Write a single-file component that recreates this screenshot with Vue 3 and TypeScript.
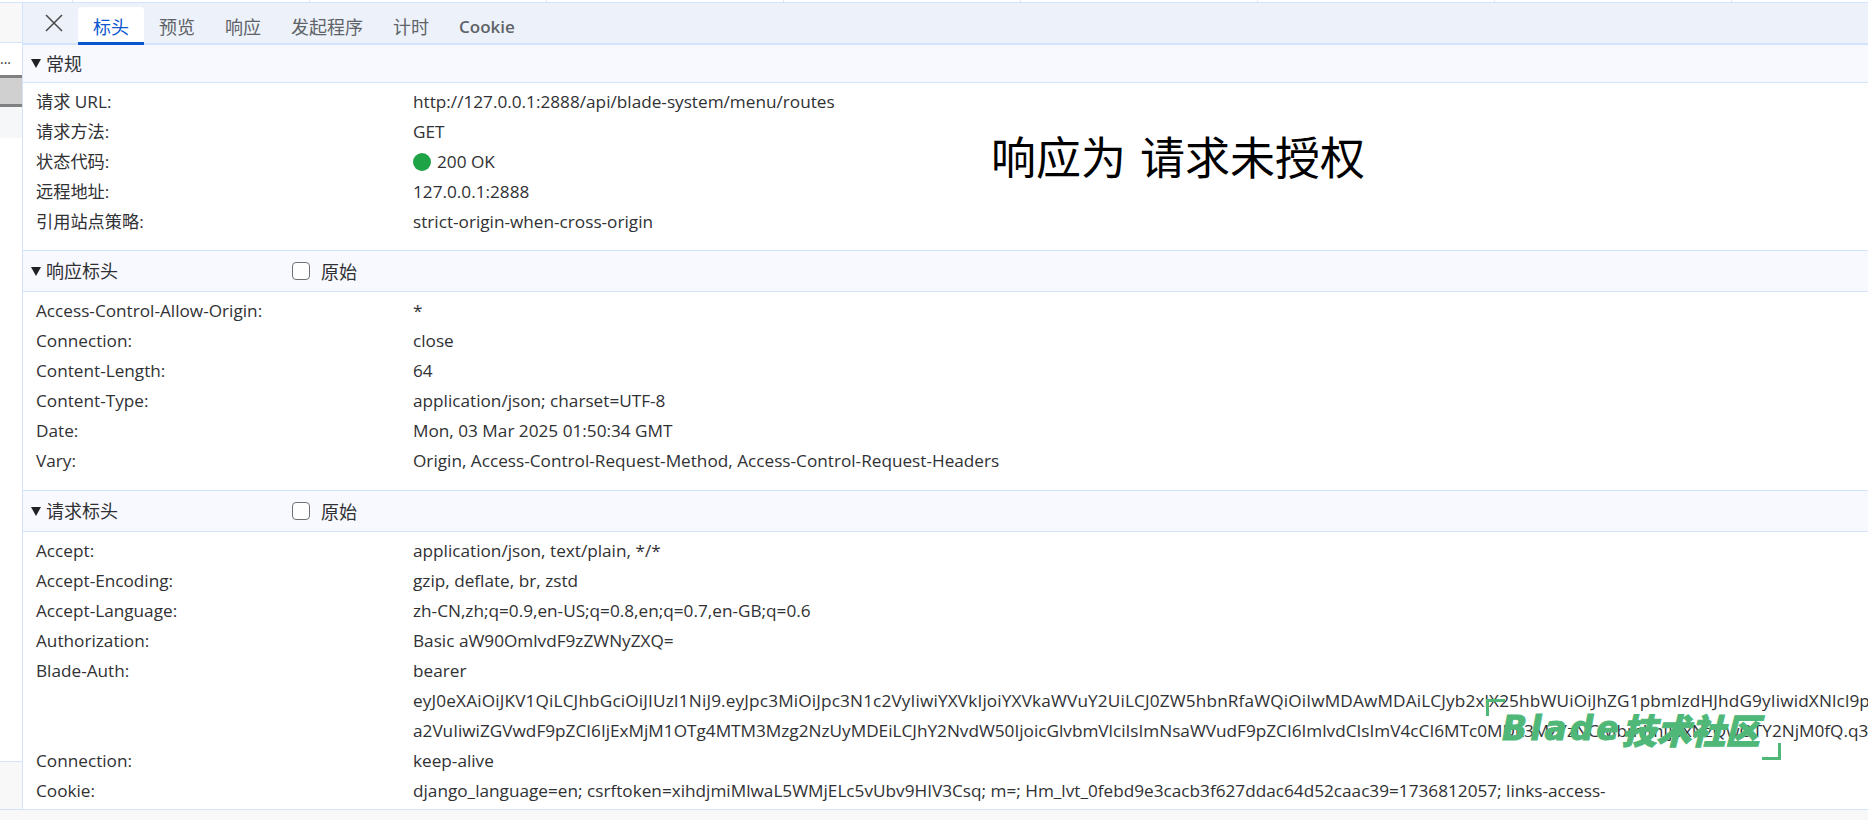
<script setup lang="ts">
interface Row { k: string; v: string[]; status?: boolean }
interface Section { title: string; raw: boolean; pad: string; rows: Row[] }

const ticks = [0, 1, 2, 3, 4, 5, 6, 7]
const tabs = ['标头', '预览', '响应', '发起程序', '计时', 'Cookie']

const sections: Section[] = [
  {
    title: '常规', raw: false, pad: 'p1',
    rows: [
      { k: '请求 URL:', v: ['http://127.0.0.1:2888/api/blade-system/menu/routes'] },
      { k: '请求方法:', v: ['GET'] },
      { k: '状态代码:', v: ['200 OK'], status: true },
      { k: '远程地址:', v: ['127.0.0.1:2888'] },
      { k: '引用站点策略:', v: ['strict-origin-when-cross-origin'] },
    ],
  },
  {
    title: '响应标头', raw: true, pad: 'p2',
    rows: [
      { k: 'Access-Control-Allow-Origin:', v: ['*'] },
      { k: 'Connection:', v: ['close'] },
      { k: 'Content-Length:', v: ['64'] },
      { k: 'Content-Type:', v: ['application/json; charset=UTF-8'] },
      { k: 'Date:', v: ['Mon, 03 Mar 2025 01:50:34 GMT'] },
      { k: 'Vary:', v: ['Origin, Access-Control-Request-Method, Access-Control-Request-Headers'] },
    ],
  },
  {
    title: '请求标头', raw: true, pad: 'p3',
    rows: [
      { k: 'Accept:', v: ['application/json, text/plain, */*'] },
      { k: 'Accept-Encoding:', v: ['gzip, deflate, br, zstd'] },
      { k: 'Accept-Language:', v: ['zh-CN,zh;q=0.9,en-US;q=0.8,en;q=0.7,en-GB;q=0.6'] },
      { k: 'Authorization:', v: ['Basic aW90OmlvdF9zZWNyZXQ='] },
      {
        k: 'Blade-Auth:',
        v: [
          'bearer',
          'eyJ0eXAiOiJKV1QiLCJhbGciOiJIUzI1NiJ9.eyJpc3MiOiJpc3N1c2VyIiwiYXVkIjoiYXVkaWVuY2UiLCJ0ZW5hbnRfaWQiOiIwMDAwMDAiLCJyb2xlX25hbWUiOiJhZG1pbmlzdHJhdG9yIiwidXNlcl9pZCI6',
          'a2VuIiwiZGVwdF9pZCI6IjExMjM1OTg4MTM3Mzg2NzUyMDEiLCJhY2NvdW50IjoicGlvbmVlciIsImNsaWVudF9pZCI6ImlvdCIsImV4cCI6MTc0MDk3MzYzNCwibmJmIjoxNzQwOTY2NjM0fQ.q3',
        ],
      },
      { k: 'Connection:', v: ['keep-alive'] },
      { k: 'Cookie:', v: ['django_language=en; csrftoken=xihdjmiMlwaL5WMjELc5vUbv9HIV3Csq; m=; Hm_lvt_0febd9e3cacb3f627ddac64d52caac39=1736812057; links-access-'] },
    ],
  },
]
</script>

<template>
  <div class="page">
    <div class="strip">
      <span v-for="t in ticks" :key="t" class="tick" :class="{ first: t === 0 }"></span>
    </div>
    <div class="body">
      <aside class="side">
        <div class="side-head"></div>
        <div class="side-dots">...</div>
        <div class="side-sel"></div>
        <div class="side-tint"></div>
        <div class="side-white"></div>
        <div class="side-foot"></div>
      </aside>
      <main class="main">
        <div class="tabbar">
          <button class="close" type="button" aria-label="关闭">
            <svg width="18" height="18" viewBox="0 0 18 18">
              <path d="M1 1 L17 17 M17 1 L1 17" stroke="#474747" stroke-width="1.5" fill="none" />
            </svg>
          </button>
          <div v-for="(t, i) in tabs" :key="t" class="tab" :class="{ active: i === 0, latin: t === 'Cookie' }">{{ t }}</div>
        </div>
        <section v-for="s in sections" :key="s.title" class="section" :class="s.pad">
          <header class="sec-head">
            <span class="tri"></span>
            <span class="sec-title">{{ s.title }}</span>
            <template v-if="s.raw">
              <span class="check"></span>
              <span class="raw">原始</span>
            </template>
          </header>
          <div class="rows">
            <div v-for="r in s.rows" :key="r.k + s.title" class="row">
              <div class="key">{{ r.k }}</div>
              <div class="val">
                <div v-for="line in r.v" :key="line" class="line" :class="{ token: line.startsWith('eyJ0') }">
                  <span v-if="r.status" class="dot"></span>{{ line }}
                </div>
              </div>
            </div>
          </div>
        </section>
      </main>
    </div>
    <div class="bottom"></div>
    <div class="note">响应为 请求未授权</div>
    <div class="wm">
      <span class="wm-tl"></span>
      <span class="wm-text"><span class="wm-latin">Blade</span><span class="wm-cjk">技术社区</span></span>
      <span class="wm-br"></span>
    </div>
  </div>
</template>

<style>
html, body { margin: 0; background: #fff; overflow: hidden; }
</style>

<style scoped>
.page {
  position: relative;
  width: 1868px;
  height: 820px;
  overflow: hidden;
  display: flex;
  flex-direction: column;
  background: #fff;
  color: #303134;
  font-family: "Open Sans", "Noto Sans CJK SC", sans-serif;
  font-size: 17.2px;
}
.strip {
  height: 2px;
  flex: none;
  display: flex;
  border-bottom: 1px solid #d3e3fd;
}
.tick { flex: 0 0 237px; box-sizing: border-box; border-right: 1px solid #e6e6e6; }
.tick.first { flex-basis: 73px; }
.body { flex: 1; min-height: 0; display: flex; }
.side {
  flex: 0 0 22px;
  display: flex;
  flex-direction: column;
  border-right: 1px solid #d3e3fd;
}
.side-head { height: 40px; background: #f8f8f8; border-bottom: 1px solid #d3e3fd; box-sizing: border-box; flex: none; }
.side-dots { height: 32px; flex: none; font-size: 14px; line-height: 32px; color: #333; overflow: hidden; background: #fff; }
.side-sel { height: 26px; flex: none; background: #d0d0d0; border-top: 3px solid #808080; border-bottom: 3px solid #808080; }
.side-tint { height: 31px; flex: none; background: #f6f7f9; }
.side-white { flex: 1; }
.side-foot { height: 48px; flex: none; background: #f8f8f8; border-top: 1px solid #d3e3fd; box-sizing: border-box; }
.main { flex: 1; min-width: 0; overflow: hidden; }
.tabbar {
  height: 42px;
  box-sizing: border-box;
  background: #edf2fa;
  border-bottom: 2px solid #d3e3fd;
  display: flex;
  align-items: flex-end;
}
.close {
  all: unset;
  width: 55px;
  height: 37px;
  display: flex;
  box-sizing: border-box;
}
.close svg { margin: 8px 0 0 22px; }
.tab {
  height: 38px;
  box-sizing: border-box;
  padding: 6px 15px 0;
  font-size: 18px;
  line-height: 28px;
  color: #5f6368;
  border-radius: 4px 4px 0 0;
  margin-bottom: -2px;
}
.tab.latin { font-weight: 600; font-size: 17px; }
.tab.active {
  background: #fff;
  color: #0b57d0;
  border-bottom: 3px solid #0b57d0;
}
.sec-head {
  background: #f8f9ff;
  border-bottom: 1px solid #d3e3fd;
  display: flex;
  align-items: center;
  padding-left: 8px;
  box-sizing: border-box;
  height: 38px;
  font-size: 18px;
  color: #303134;
}
.section + .section .sec-head { height: 41px; }
.sec-title { position: relative; top: -1px; flex: 0 0 246px; }
.section + .section { border-top: 1px solid #d3e3fd; }
.tri {
  width: 0;
  height: 0;
  flex: none;
  border-left: 5px solid transparent;
  border-right: 5px solid transparent;
  border-top: 9px solid #202124;
  margin-right: 5px;
}
.check {
  width: 18px;
  height: 18px;
  box-sizing: border-box;
  border: 1.5px solid #6f7175;
  border-radius: 4px;
  background: #fff;
  flex: none;
  margin-right: 11px;
}
.raw { font-size: 18px; }
.rows { padding: 4px 0 14px 13px; }
.p1 .rows { padding-bottom: 13px; }
.row { display: grid; grid-template-columns: 377px 1fr; }
.key { line-height: 30px; white-space: nowrap; }
.val { min-width: 0; }
.line { line-height: 30px; white-space: nowrap; overflow: hidden; }
.line.token { letter-spacing: 0.15px; }
.dot {
  display: inline-block;
  width: 18px;
  height: 18px;
  border-radius: 50%;
  background: #1ea446;
  margin-right: 6px;
  vertical-align: -3px;
}
.bottom {
  height: 10px;
  flex: none;
  background: #f8f8f8;
  border-top: 1px solid #d3e3fd;
}
.note {
  position: absolute;
  left: 991px;
  top: 125px;
  font-size: 45px;
  line-height: 62px;
  word-spacing: 4px;
  color: #000;
  white-space: nowrap;
  font-family: "Noto Sans CJK SC", sans-serif;
}
.wm { position: absolute; left: 1486px; top: 699px; width: 295px; height: 61px; color: #4fb878; }
.wm-tl, .wm-br { position: absolute; width: 16px; height: 14px; }
.wm-tl { left: 0; top: 0; border-left: 3px solid #4fb878; border-top: 3px solid #4fb878; }
.wm-br { right: 0; bottom: 0; border-right: 3px solid #4fb878; border-bottom: 3px solid #4fb878; }
.wm-text {
  position: absolute;
  left: 16px;
  top: 8px;
  line-height: 44px;
  white-space: nowrap;
  display: flex;
  font-style: italic;
  font-weight: 700;
  -webkit-text-stroke: 1px #4fb878;
}
.wm-latin { font-family: "DejaVu Sans", sans-serif; letter-spacing: 3px; font-size: 33px; }
.wm-cjk { font-family: "Noto Sans CJK SC", sans-serif; font-weight: 900; font-size: 34.5px; }
</style>
